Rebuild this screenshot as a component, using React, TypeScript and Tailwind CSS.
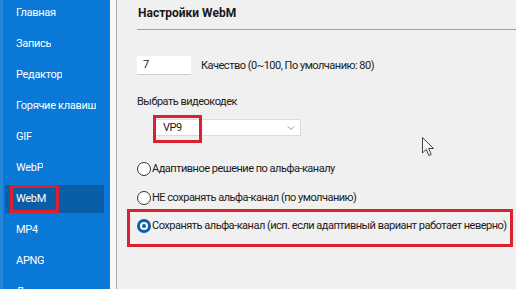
import React from 'react'
import { ChevronDown } from 'lucide-react'

const menu = ['Главная', 'Запись', 'Редактор', 'Горячие клавиш', 'GIF', 'WebP', 'WebM', 'MP4', 'APNG', 'Дополнительно']

function Radio({ checked }: { checked?: boolean }) {
  if (checked) {
    return (
      <span className="w-[14px] h-[14px] rounded-full border-[3px] border-[#0b5ea6] bg-white flex items-center justify-center shrink-0">
        <span className="w-[4px] h-[4px] rounded-full bg-[#0b5ea6]" />
      </span>
    )
  }
  return <span className="w-[14px] h-[14px] rounded-full border border-[#333] bg-white shrink-0" />
}

export default function App() {
  return (
    <div
      className="relative flex w-[516px] h-[289px] overflow-hidden bg-[#f0f0f0] text-[11px] leading-[16px] tracking-[-0.5px] text-[#1a1a1a]"
      style={{ fontFamily: 'Roboto, "Liberation Sans", sans-serif' }}
    >
      {/* Sidebar */}
      <div className="w-[110px] shrink-0 bg-[#0a78d6] border-l-[3px] border-[#2786d8] text-white tracking-[-0.3px]">
        <div className="-mt-[3px] flex flex-col">
          {menu.map((item) => {
            const active = item === 'WebM'
            return (
              <div key={item} className="h-[31px] flex items-center pl-[2px] pr-[6px]">
                {active ? (
                  <div className="w-full h-[28px] bg-[#0a5ea8] flex items-center pl-[5px]">
                    <span className="h-[28px] pl-[3px] pr-[10px] flex items-center border-[3px] border-[#d92130] whitespace-nowrap">
                      {item}
                    </span>
                  </div>
                ) : (
                  <span className="pl-[11px] whitespace-nowrap overflow-hidden">{item}</span>
                )}
              </div>
            )
          })}
        </div>
      </div>
      <div className="w-[6px] shrink-0 bg-[#f8f8f8]" />
      <div className="w-px shrink-0 bg-[#a9a9a9]" />

      {/* Content */}
      <div className="flex-1 flex flex-col pl-[20px]">
        <div className="h-[25px] flex items-center pl-[1px] font-bold text-[12px] tracking-normal">Настройки WebM</div>
        <div className="mt-[4px] h-px bg-[#a0a0a0]" />

        <div className="mt-[26px] flex items-center">
          <div className="w-[54px] h-[19px] bg-white border-b border-[#cfcfcf] flex items-center pl-[6px]">7</div>
          <span className="ml-[10px]">Качество (0~100, По умолчанию: 80)</span>
        </div>

        <div className="mt-[19px]">Выбрать видеокодек</div>

        <div className="relative mt-[5px] ml-[16px] w-[148px] h-[28px]">
          <div className="mt-[4px] h-[17px] bg-white border border-[#dcdcdc] flex items-center justify-between pl-[9px] pr-[3px]">
            <span>VP9</span>
            <ChevronDown className="w-[12px] h-[12px] text-[#777]" strokeWidth={1.5} />
          </div>
          <div className="absolute left-0 top-0 w-[49px] h-[28px] border-[3px] border-[#d92130]" />
        </div>

        <div className="mt-[18px] flex items-center gap-[1px]">
          <Radio />
          <span>Адаптивное решение по альфа-каналу</span>
        </div>

        <div className="mt-[13px] flex items-center gap-[1px]">
          <Radio />
          <span>НЕ сохранять альфа-канал (по умолчанию)</span>
        </div>

        <div className="mt-[3px] -ml-[10px] w-[386px] h-[38px] border-[3px] border-[#d92130] pl-[7px] pt-[6px]">
          <div className="flex items-center gap-[1px] h-[16px]">
            <Radio checked />
            <span className="whitespace-nowrap">Сохранять альфа-канал (исп. если адаптивный вариант работает неверно)</span>
          </div>
        </div>
      </div>

      {/* Mouse pointer */}
      <svg className="absolute left-[422px] top-[137px]" width="13" height="20" viewBox="0 0 13 20">
        <path d="M0.5 0.5 L0.5 16 L4.3 12.4 L6.8 18.5 L9.2 17.5 L6.7 11.5 L11.5 11.5 Z" fill="#f4f4f4" stroke="#444" strokeWidth="1" strokeLinejoin="round" />
      </svg>
    </div>
  )
}
